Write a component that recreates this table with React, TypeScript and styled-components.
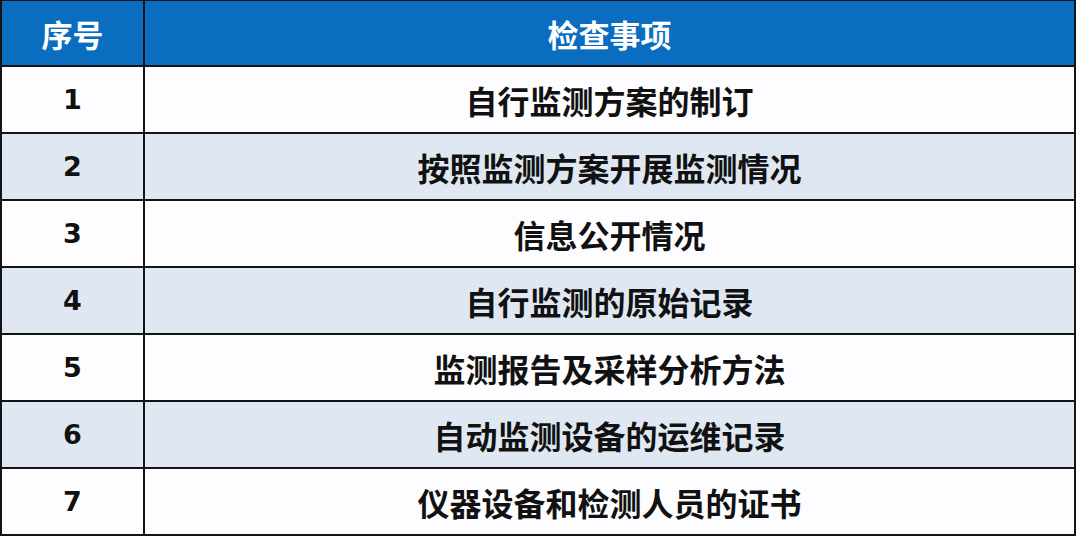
import React from "react"
import styled, { createGlobalStyle } from "styled-components"

const BLUE = "#0a6dbf"
const STRIPE = "#dfe8f2"
const LINE = "#141414"

const GlobalStyle = createGlobalStyle`
  html, body {
    margin: 0;
    padding: 0;
    background: #ffffff;
  }
  body {
    font-family: "Noto Sans CJK SC", "Liberation Sans", sans-serif;
  }
`

const Table = styled.table`
  width: 1076px;
  border-collapse: collapse;
  table-layout: fixed;
`

const HeadCell = styled.th<{ $narrow?: boolean }>`
  width: ${(p) => (p.$narrow ? "141px" : "auto")};
  height: 64px;
  padding: 0;
  background: ${BLUE};
  color: #ffffff;
  font-size: 31px;
  font-weight: 700;
  text-align: center;
  border: 2px solid ${LINE};
  border-top: 1px solid ${LINE};
`

const Row = styled.tr<{ $striped: boolean }>`
  background: ${(p) => (p.$striped ? STRIPE : "#fdfcfe")};
`

const NumCell = styled.td`
  height: 65px;
  padding: 0;
  text-align: center;
  font-family: "DejaVu Sans", "Liberation Sans", sans-serif;
  font-size: 27px;
  font-weight: 700;
  color: #111111;
  border: 2px solid ${LINE};
`

const ItemCell = styled.td`
  padding: 0;
  text-align: center;
  font-size: 32px;
  font-weight: 700;
  color: #111111;
  border: 2px solid ${LINE};
`

const items = [
  "自行监测方案的制订",
  "按照监测方案开展监测情况",
  "信息公开情况",
  "自行监测的原始记录",
  "监测报告及采样分析方法",
  "自动监测设备的运维记录",
  "仪器设备和检测人员的证书",
]

const App = () => (
  <>
    <GlobalStyle />
    <Table>
      <thead>
        <tr>
          <HeadCell $narrow>序号</HeadCell>
          <HeadCell>检查事项</HeadCell>
        </tr>
      </thead>
      <tbody>
        {items.map((item, i) => (
          <Row key={item} $striped={i % 2 === 1}>
            <NumCell>{i + 1}</NumCell>
            <ItemCell>{item}</ItemCell>
          </Row>
        ))}
      </tbody>
    </Table>
  </>
)

export default App
